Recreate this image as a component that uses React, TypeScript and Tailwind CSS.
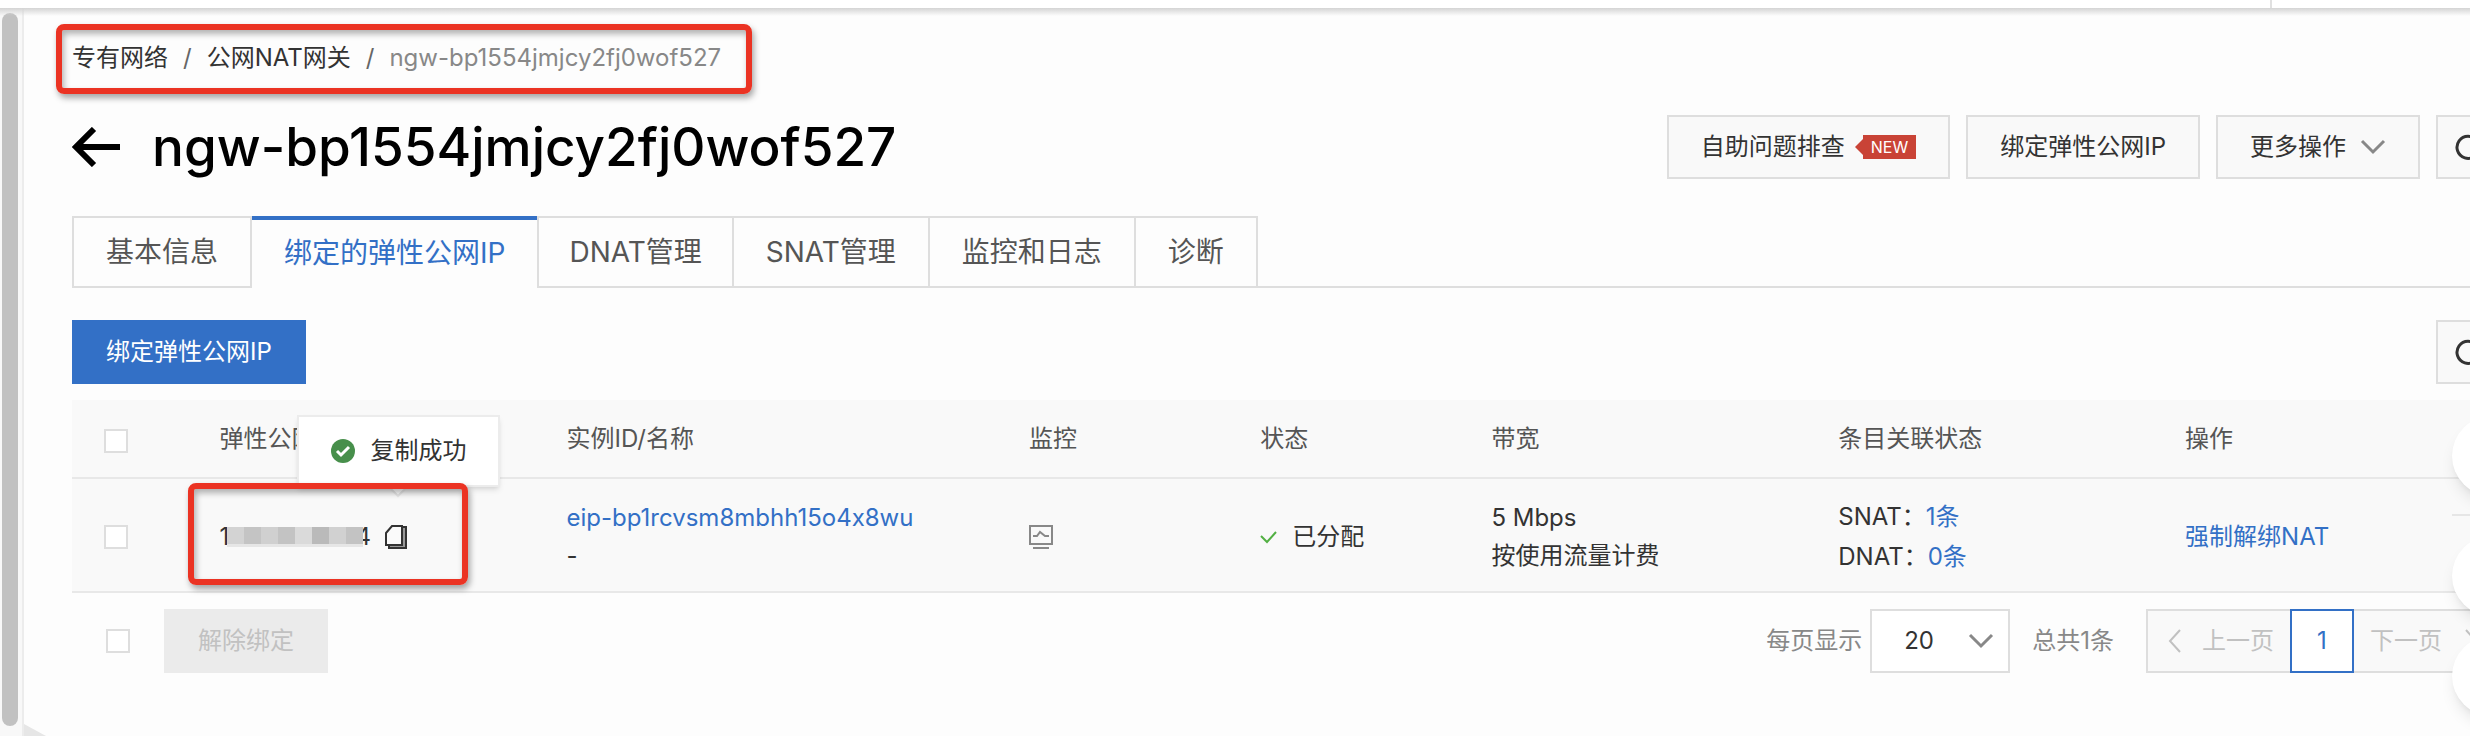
import type { ReactNode } from "react";

function OutlineButton({ children, className = "px-8" }: { children?: ReactNode; className?: string }) {
  return (
    <button type="button" className={`flex h-16 shrink-0 items-center border-2 border-[#dedede] bg-[#f9f9f9] text-[#333] ${className}`}>
      {children}
    </button>
  );
}

function ChevronDown() {
  return (
    <svg width="26" height="16" viewBox="0 0 26 16" fill="none" stroke="#888" strokeWidth="3">
      <path d="M2 2l11 11L24 2" />
    </svg>
  );
}

function RefreshButton() {
  return (
    <button type="button" aria-label="刷新" className="flex h-16 w-16 shrink-0 items-center justify-center border-2 border-[#dedede] bg-[#f9f9f9]">
      <svg width="26" height="26" viewBox="0 0 26 26" fill="none" stroke="#333" strokeWidth="3">
        <path d="M22 7a11 11 0 1 0 2 6" />
        <path d="M23 1v7h-7" />
      </svg>
    </button>
  );
}

function Checkbox({ label }: { label: string }) {
  return (
    <input
      type="checkbox"
      aria-label={label}
      className="block h-6 w-6 appearance-none border-2 border-[#dedede] bg-white"
    />
  );
}

const tabs = ["基本信息", "绑定的弹性公网IP", "DNAT管理", "SNAT管理", "监控和日志", "诊断"];

function tabStyle(i: number) {
  if (i === 1) return "border-t-4 border-[#3370c6] px-8 pb-0.5 text-[#3370c6]";
  if (i === 0) return "border-2 border-[#dedede] px-8 text-[#555]";
  if (i === 2) return "border-2 border-[#dedede] px-[30px] text-[#555]";
  return "border-y-2 border-r-2 border-[#dedede] px-8 text-[#555]";
}

// hides the middle of the IP address
const mosaic = [
  "bg-[#d3d3d3]",
  "bg-[#c4c4c4]",
  "bg-[#d0d0d0]",
  "bg-[#c3c3c3]",
  "bg-[#dadada]",
  "bg-[#bababa]",
  "bg-[#d1d1d1]",
  "bg-[#c3c3c3]",
];

export default function App() {
  return (
    <div className="min-h-screen overflow-hidden bg-[#fdfdfd] font-['Inter','Noto_Sans_CJK_SC',sans-serif] text-[24px] leading-8 text-[#333] [font-feature-settings:'calt'_0]">
      <div className="flex h-2 justify-end bg-white">
        <div className="mr-[198px] w-0.5 bg-[#e0e0e0]" />
      </div>
      <div className="flex min-h-[calc(100vh-8px)]">
        <aside className="w-6 shrink-0 border-r-2 border-[#ececec] bg-[#f8f8f8] pt-[5px] pb-[10px] pl-0.5">
          <div className="h-full w-4 rounded-full bg-[#c1c1c1]" />
        </aside>
        <main className="relative min-w-0 flex-1 pl-12">
          <div className="absolute top-0 right-0 -left-6 h-2 bg-linear-to-b from-[#d4d4d4] to-transparent" />
          <div className="-mr-[30px]">
            <nav className="relative flex h-24 items-center gap-[15px] pt-1">
              <a href="#vpc">专有网络</a>
              <span className="text-[#666]">/</span>
              <a href="#nat">公网NAT网关</a>
              <span className="text-[#666]">/</span>
              <span className="text-[#888]">ngw-bp1554jmjcy2fj0wof527</span>
              <div className="pointer-events-none absolute top-4 -left-4 h-[70px] w-[696px] rounded-lg border-6 border-[#eb3323] shadow-[2px_4px_6px_rgba(0,0,0,0.35),inset_2px_4px_6px_rgba(0,0,0,0.3)]" />
            </nav>

            <header className="flex h-[86px] items-center gap-4">
              <h1 className="mr-auto flex items-center gap-8 text-[53px] leading-[72px] font-medium text-black">
                <svg width="48" height="40" viewBox="0 0 48 40" fill="none" stroke="currentColor" strokeWidth="6">
                  <path d="M48 20H4M22 2L4 20l18 18" />
                </svg>
                ngw-bp1554jmjcy2fj0wof527
              </h1>
              <OutlineButton>
                自助问题排查
                <span className="ml-2.5 flex items-center">
                  <span className="h-0 w-0 border-y-8 border-r-8 border-y-transparent border-r-[#c94336]" />
                  <span className="h-6 bg-[#c94336] px-2 text-[16px] leading-6 text-white">NEW</span>
                </span>
              </OutlineButton>
              <OutlineButton>绑定弹性公网IP</OutlineButton>
              <OutlineButton className="gap-3.5 px-8">
                更多操作
                <ChevronDown />
              </OutlineButton>
              <RefreshButton />
            </header>

            <div role="tablist" className="mt-[26px] flex h-[72px] text-[28px]">
              {tabs.map((tab, i) => (
                <button key={tab} type="button" role="tab" aria-selected={i === 1} className={tabStyle(i)}>
                  {tab}
                </button>
              ))}
              <div className="flex-1 border-b-2 border-[#dedede]" />
            </div>

            <div className="flex h-28 items-center justify-between pt-8 pb-4">
              <button type="button" className="h-16 bg-[#3370c6] px-[34px] text-white">
                绑定弹性公网IP
              </button>
              <RefreshButton />
            </div>

            <table className="w-full table-fixed border-collapse bg-[#f9f9f9] text-left">
              <colgroup>
                <col className="w-1/21" />
                <col className="w-3/21" />
                <col className="w-4/21" />
                <col className="w-2/21" />
                <col className="w-2/21" />
                <col className="w-3/21" />
                <col className="w-3/21" />
                <col className="w-3/21" />
              </colgroup>
              <thead className="text-[#555]">
                <tr className="h-[78px] border-b-2 border-[#e8e8e8]">
                  <th className="pt-1 pl-8"><Checkbox label="全选" /></th>
                  <th className="pl-8 font-normal">弹性公网IP</th>
                  <th className="pl-8 font-normal">实例ID/名称</th>
                  <th className="pl-8 font-normal">监控</th>
                  <th className="pl-8 font-normal">状态</th>
                  <th className="pl-8 font-normal">带宽</th>
                  <th className="pl-8 font-normal">条目关联状态</th>
                  <th className="pl-8 font-normal">操作</th>
                </tr>
              </thead>
              <tbody>
                <tr className="h-[114px] border-b-2 border-[#e8e8e8]">
                  <td className="pt-1 pl-8"><Checkbox label="选择弹性公网IP" /></td>
                  <td className="relative pt-1 pl-8">
                    <div className="flex items-center">
                      <span>1</span>
                      <span className="relative -ml-0.5 flex h-5">
                        {mosaic.map((tone, i) => (
                          <span key={i} className={`w-[17px] border-b-3 border-[#e6e6e6] ${tone}`} />
                        ))}
                      </span>
                      <span className="-ml-2">4</span>
                      <button type="button" aria-label="复制" className="ml-3.5">
                        <svg width="22" height="24" viewBox="0 0 22 24" fill="none" stroke="#333" strokeWidth="2">
                          <path d="M17 2h4v21H4v-3" fill="#999" />
                          <path d="M1 8l6-7h10v19H1z" fill="#fafafa" />
                        </svg>
                      </button>
                    </div>
                    <div role="status" className="absolute -top-16 left-[109px] flex h-[72px] w-[203px] items-center gap-4 border-2 border-[#ececec] bg-white pl-8 shadow-md">
                      <svg width="24" height="24" viewBox="0 0 24 24" className="shrink-0">
                        <circle cx="12" cy="12" r="12" fill="#478f4b" />
                        <path d="M6 12l4 4 8-8" fill="none" stroke="#fff" strokeWidth="3" />
                      </svg>
                      复制成功
                      <svg width="16" height="10" viewBox="0 0 16 10" className="absolute top-[71px] left-[91px]">
                        <path d="M0 0l8 8 8-8" fill="#fff" stroke="#e6e6e6" strokeWidth="2" />
                      </svg>
                    </div>
                    <div className="pointer-events-none absolute top-1 left-0 h-[102px] w-[280px] rounded-lg border-6 border-[#eb3323] shadow-[2px_4px_6px_rgba(0,0,0,0.35),inset_2px_4px_6px_rgba(0,0,0,0.3)]" />
                  </td>
                  <td className="pt-1 pl-8 leading-[38px]">
                    <a href="#eip" className="text-[#3370c6]">eip-bp1rcvsm8mbhh15o4x8wu</a>
                    <div>-</div>
                  </td>
                  <td className="pt-1 pl-8">
                    <svg width="24" height="24" viewBox="0 0 24 24" fill="none" stroke="#888" strokeWidth="2">
                      <path d="M1 1h22v18H1zM4 23h16M4 11h4l3-4 5 4h4" />
                    </svg>
                  </td>
                  <td className="pt-1 pl-8">
                    <span className="flex items-center gap-3.5">
                      <svg width="18" height="14" viewBox="0 0 18 14" fill="none" stroke="#52b043" strokeWidth="2">
                        <path d="M1 6l6 6L16 2" />
                      </svg>
                      已分配
                    </span>
                  </td>
                  <td className="pt-1 pl-8 leading-[38px]">
                    <div>5 Mbps</div>
                    <div>按使用流量计费</div>
                  </td>
                  <td className="pt-1 pl-8 leading-10">
                    <div>SNAT：<a href="#snat" className="text-[#3370c6]">1条</a></div>
                    <div>DNAT：<a href="#dnat" className="text-[#3370c6]">0条</a></div>
                  </td>
                  <td className="pt-1 pl-8">
                    <a href="#unbind" className="text-[#3370c6]">强制解绑NAT</a>
                  </td>
                </tr>
              </tbody>
            </table>

            <footer className="flex items-center pt-4 pl-[34px]">
              <Checkbox label="选择本页" />
              <button type="button" disabled className="ml-[34px] h-16 bg-[#ebebeb] px-[34px] text-[#c1c1c1]">
                解除绑定
              </button>
              <label htmlFor="page-size" className="mr-2 ml-auto text-[#888]">每页显示</label>
              <span className="relative mr-[22px] flex items-center">
                <select id="page-size" className="h-16 w-[140px] appearance-none border-2 border-[#dedede] bg-white pl-8">
                  <option>20</option>
                </select>
                <span className="pointer-events-none absolute right-4"><ChevronDown /></span>
              </span>
              <span className="mr-8 text-[#888]">总共1条</span>
              <button type="button" disabled className="flex h-16 w-36 items-center justify-between border-2 border-r-0 border-[#dedede] bg-[#f9f9f9] pr-4 pl-5 text-[#c1c1c1]">
                <svg width="14" height="24" viewBox="0 0 14 24" fill="none" stroke="currentColor" strokeWidth="2">
                  <path d="M12 1L2 12l10 11" />
                </svg>
                上一页
              </button>
              <button type="button" className="h-16 w-16 border-2 border-[#3370c6] bg-white text-[#3370c6]">1</button>
              <button type="button" disabled className="flex h-16 w-[146px] items-center justify-between border-2 border-l-0 border-[#dedede] bg-[#f9f9f9] pr-5 pl-4 text-[#c1c1c1]">
                下一页
                <svg width="14" height="24" viewBox="0 0 14 24" fill="none" stroke="currentColor" strokeWidth="2">
                  <path d="M2 1l10 11L2 23" />
                </svg>
              </button>
            </footer>
          </div>

          {/* floating side bubbles */}
          <div className="absolute top-[408px] -right-[62px] flex w-20 flex-col">
            <span className="h-20 rounded-full bg-white shadow-lg" />
            <span className="mt-[18px] h-0.5 bg-[#e6e6e6]" />
            <span className="mt-5 h-20 rounded-full bg-white shadow-lg" />
            <span className="mt-5 h-20 rounded-full bg-white shadow-lg" />
          </div>
          <svg width="22" height="12" viewBox="0 0 22 12" className="absolute bottom-0 left-0">
            <path d="M0 0l22 12H0z" fill="#e6e6e6" />
          </svg>
        </main>
      </div>
    </div>
  );
}
